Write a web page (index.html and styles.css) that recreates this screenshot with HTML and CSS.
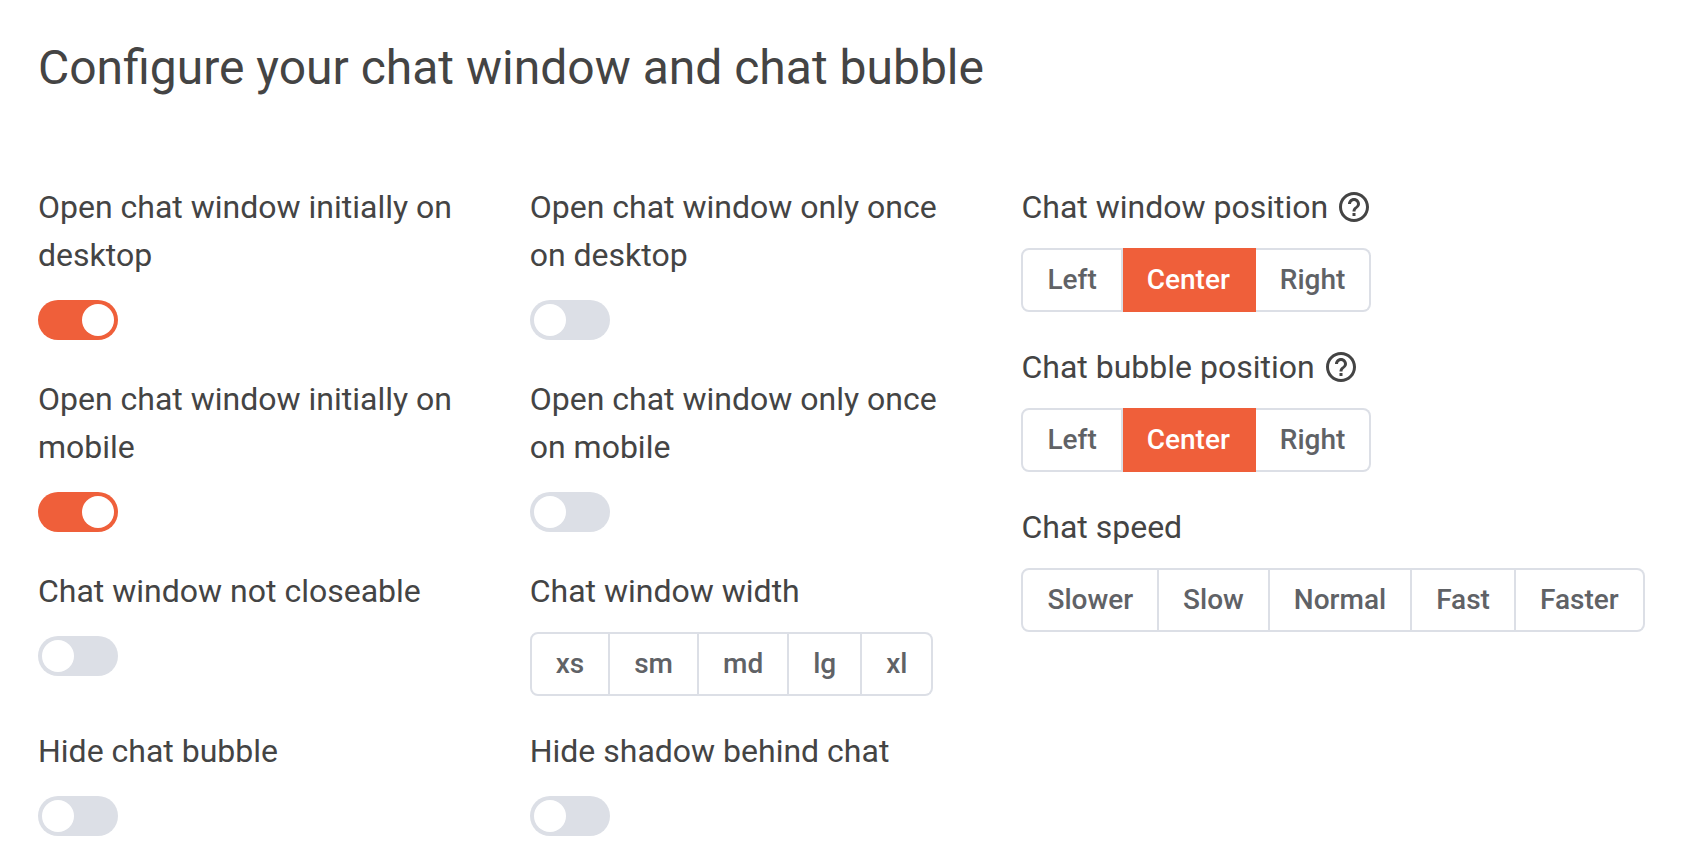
FILE: index.html
```html
<!DOCTYPE html>
<html lang="en">
<head>
  <meta charset="utf-8">
  <meta name="viewport" content="width=device-width, initial-scale=1">
  <title>Chat settings</title>
  <link rel="stylesheet" href="styles.css">
</head>
<body>
  <main class="settings">
    <h1 class="settings-title">Configure your chat window and chat bubble</h1>
    <form class="columns">
      <div class="behaviour">
        <div class="field">
          <label class="field-label" for="open-desktop">Open chat window initially on desktop</label>
          <input class="switch" type="checkbox" role="switch" id="open-desktop" checked>
        </div>
        <div class="field">
          <label class="field-label" for="once-desktop">Open chat window only once on desktop</label>
          <input class="switch" type="checkbox" role="switch" id="once-desktop">
        </div>
        <div class="field">
          <label class="field-label" for="open-mobile">Open chat window initially on mobile</label>
          <input class="switch" type="checkbox" role="switch" id="open-mobile" checked>
        </div>
        <div class="field">
          <label class="field-label" for="once-mobile">Open chat window only once on mobile</label>
          <input class="switch" type="checkbox" role="switch" id="once-mobile">
        </div>
        <div class="field">
          <label class="field-label" for="not-closeable">Chat window not closeable</label>
          <input class="switch" type="checkbox" role="switch" id="not-closeable">
        </div>
        <div class="field" role="radiogroup" aria-labelledby="width-label">
          <div class="field-label" id="width-label">Chat window width</div>
          <div class="segments">
            <label class="segment"><input class="segment-input" type="radio" name="width" value="xs">xs</label>
            <label class="segment"><input class="segment-input" type="radio" name="width" value="sm">sm</label>
            <label class="segment"><input class="segment-input" type="radio" name="width" value="md">md</label>
            <label class="segment"><input class="segment-input" type="radio" name="width" value="lg">lg</label>
            <label class="segment"><input class="segment-input" type="radio" name="width" value="xl">xl</label>
          </div>
        </div>
        <div class="field">
          <label class="field-label" for="hide-bubble">Hide chat bubble</label>
          <input class="switch" type="checkbox" role="switch" id="hide-bubble">
        </div>
        <div class="field">
          <label class="field-label" for="hide-shadow">Hide shadow behind chat</label>
          <input class="switch" type="checkbox" role="switch" id="hide-shadow">
        </div>
      </div>

      <div class="placement">
        <div class="field" role="radiogroup" aria-labelledby="window-position-label">
          <div class="field-label">
            <span id="window-position-label">Chat window position</span>
            <button class="help" type="button" aria-label="About chat window position">
              <svg class="help-icon" viewBox="0 0 24 24" aria-hidden="true"><path d="M11 18h2v-2h-2v2zm1-16C6.480 2 2 6.480 2 12s4.480 10 10 10 10-4.480 10-10S17.520 2 12 2zm0 18c-4.410 0-8-3.590-8-8s3.590-8 8-8 8 3.590 8 8-3.590 8-8 8zm0-14c-2.210 0-4 1.790-4 4h2c0-1.100.9-2 2-2s2 .9 2 2c0 2-3 1.750-3 5h2c0-2.250 3-2.500 3-5 0-2.210-1.790-4-4-4z"/></svg>
            </button>
          </div>
          <div class="segments">
            <label class="segment"><input class="segment-input" type="radio" name="window-position" value="left">Left</label>
            <label class="segment"><input class="segment-input" type="radio" name="window-position" value="center" checked>Center</label>
            <label class="segment"><input class="segment-input" type="radio" name="window-position" value="right">Right</label>
          </div>
        </div>
        <div class="field" role="radiogroup" aria-labelledby="bubble-position-label">
          <div class="field-label">
            <span id="bubble-position-label">Chat bubble position</span>
            <button class="help" type="button" aria-label="About chat bubble position">
              <svg class="help-icon" viewBox="0 0 24 24" aria-hidden="true"><path d="M11 18h2v-2h-2v2zm1-16C6.480 2 2 6.480 2 12s4.480 10 10 10 10-4.480 10-10S17.520 2 12 2zm0 18c-4.410 0-8-3.590-8-8s3.590-8 8-8 8 3.590 8 8-3.590 8-8 8zm0-14c-2.210 0-4 1.790-4 4h2c0-1.100.9-2 2-2s2 .9 2 2c0 2-3 1.750-3 5h2c0-2.250 3-2.500 3-5 0-2.210-1.790-4-4-4z"/></svg>
            </button>
          </div>
          <div class="segments">
            <label class="segment"><input class="segment-input" type="radio" name="bubble-position" value="left">Left</label>
            <label class="segment"><input class="segment-input" type="radio" name="bubble-position" value="center" checked>Center</label>
            <label class="segment"><input class="segment-input" type="radio" name="bubble-position" value="right">Right</label>
          </div>
        </div>
        <div class="field" role="radiogroup" aria-labelledby="speed-label">
          <div class="field-label" id="speed-label">Chat speed</div>
          <div class="segments">
            <label class="segment"><input class="segment-input" type="radio" name="speed" value="slower">Slower</label>
            <label class="segment"><input class="segment-input" type="radio" name="speed" value="slow">Slow</label>
            <label class="segment"><input class="segment-input" type="radio" name="speed" value="normal">Normal</label>
            <label class="segment"><input class="segment-input" type="radio" name="speed" value="fast">Fast</label>
            <label class="segment"><input class="segment-input" type="radio" name="speed" value="faster">Faster</label>
          </div>
        </div>
      </div>
    </form>
  </main>
</body>
</html>
```

FILE: styles.css
```css
:root {
  --accent: #ef5f3a;
  --line: #dcdfe6;
  --text: #444444;
  --text-soft: #606266;
}

* {
  box-sizing: border-box;
}

body {
  margin: 0;
  background: #ffffff;
  color: var(--text);
  font-family: Roboto, "Liberation Sans", sans-serif;
  font-size: 32px;
  line-height: 48px;
}

.settings {
  padding: 40px 35px 16px 38px;
}

.settings-title {
  margin: 0 0 87px;
  font-size: 48px;
  font-weight: 400;
  line-height: 56px;
}

.columns {
  display: grid;
  grid-template-columns: 2fr 2fr 3fr;
  column-gap: 64px;
}

.behaviour {
  display: grid;
  grid-column: span 2;
  grid-template-columns: subgrid;
  row-gap: 31px;
  align-content: start;
}

.placement {
  display: flex;
  flex-direction: column;
  gap: 31px;
}

.field {
  display: flex;
  flex-direction: column;
  align-items: flex-start;
}

.field-label {
  display: flex;
  align-items: center;
  gap: 8px;
}

.switch {
  appearance: none;
  display: flex;
  width: 80px;
  height: 40px;
  margin: 21px 0 4px;
  padding: 4px;
  border-radius: 20px;
  background: var(--line);
  cursor: pointer;
}

.switch::before {
  content: "";
  width: 32px;
  height: 32px;
  border-radius: 50%;
  background: #ffffff;
}

.switch:checked {
  justify-content: flex-end;
  background: var(--accent);
}

.segments {
  display: flex;
  margin-top: 17px;
}

.segment {
  padding: 16px 24px;
  border: 2px solid var(--line);
  border-left-width: 0;
  color: var(--text-soft);
  font-size: 28px;
  font-weight: 500;
  line-height: 28px;
  cursor: pointer;
}

.segment:first-child {
  border-left-width: 2px;
  border-radius: 8px 0 0 8px;
}

.segment:last-child {
  border-radius: 0 8px 8px 0;
}

.segment:has(:checked) {
  border-color: var(--accent);
  background: var(--accent);
  color: #ffffff;
}

.segment-input {
  appearance: none;
  position: absolute;
  margin: 0;
}

.segment:has(:focus-visible),
.switch:focus-visible,
.help:focus-visible {
  outline: 2px solid var(--text);
  outline-offset: 2px;
}

.help {
  display: flex;
  padding: 0;
  border: 0;
  background: none;
  color: inherit;
  cursor: pointer;
}

.help-icon {
  width: 36px;
  height: 36px;
  fill: currentColor;
}
```
